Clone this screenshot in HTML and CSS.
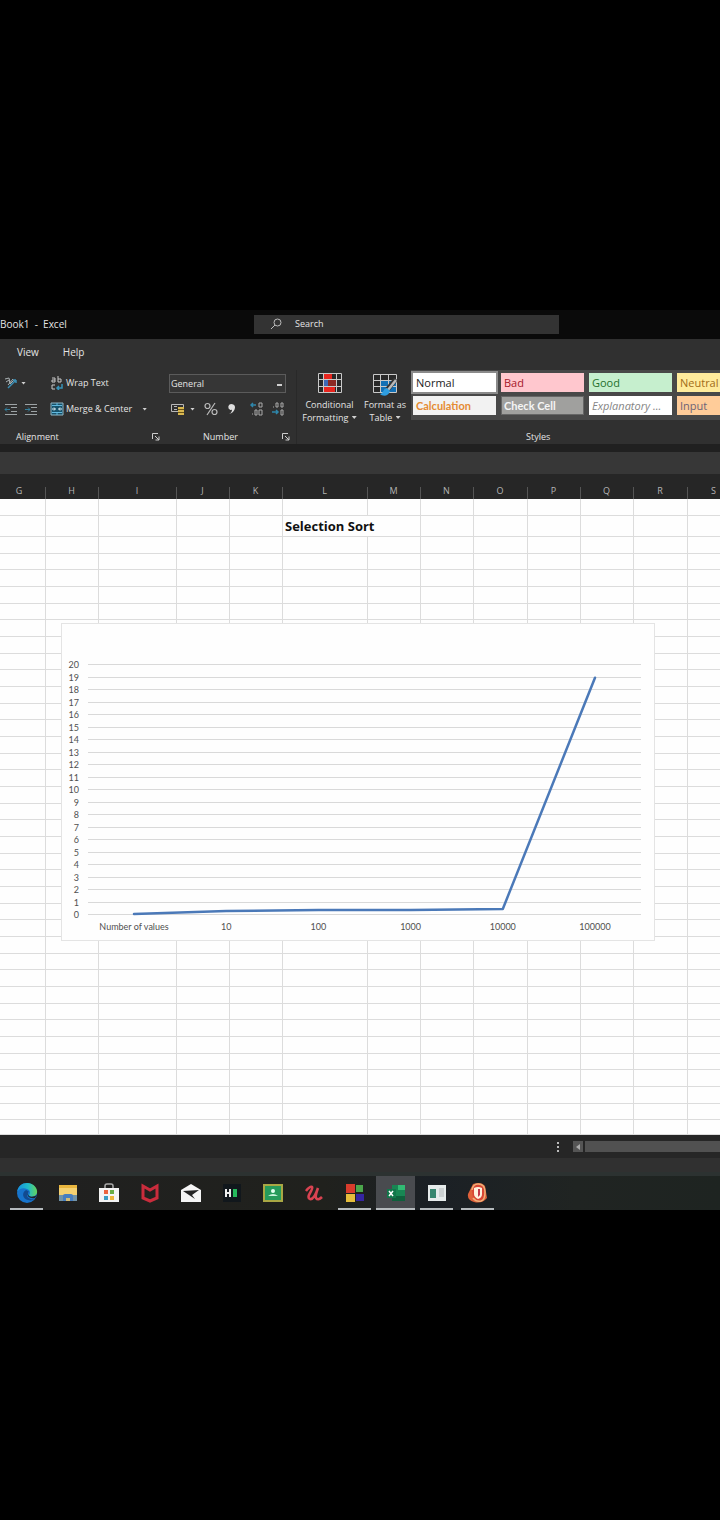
FILE: index.html
```html
<!DOCTYPE html>
<html lang="en">
<head>
<meta charset="utf-8">
<meta name="viewport" content="width=device-width, initial-scale=1">
<title>Book1 - Excel</title>
<link rel="stylesheet" href="styles.css">
</head>
<body>
<div class="screen">
  <header class="titlebar">
    <span class="doc-name">Book1 &nbsp;-&nbsp; Excel</span>
    <label class="search">
      <svg class="search-icon" viewBox="0 0 12 12"><circle cx="7.5" cy="4.5" r="3.5"/><path d="M5 7 1 11"/></svg>
      <input type="text" placeholder="Search" aria-label="Search">
    </label>
  </header>

  <nav class="tabs">
    <button type="button">View</button>
    <button type="button">Help</button>
  </nav>

  <div class="ribbon">
    <section class="group alignment">
      <div class="tools">
        <div class="tool-col">
          <button type="button" class="tool-row" aria-label="Orientation">
            <svg width="14" height="14" viewBox="0 0 14 14" fill="none"><path d="M1 3l4-1 1 4M2 6l3-2 1 4 4-4M4 9l5-6" stroke="#a9b0b2"/><path d="M4 12l8-8M12 4v3M12 4H9" stroke="#3b8fb5" stroke-width="1.5"/></svg>
            <i class="caret"></i>
          </button>
          <div class="tool-row indents">
            <button type="button" aria-label="Decrease indent"><svg width="13" height="13" viewBox="0 0 13 13" fill="none" stroke="#9da3a5"><path d="M1 1.5h12M7 4.5h6M7 8.5h6M1 11.5h12"/><path d="M6 6.5H1m2-2-2 2 2 2" stroke="#337f9d"/></svg></button>
            <button type="button" aria-label="Increase indent"><svg width="13" height="13" viewBox="0 0 13 13" fill="none" stroke="#9da3a5"><path d="M1 1.5h12M7 4.5h6M7 8.5h6M1 11.5h12"/><path d="M1 6.5h5m-2-2 2 2-2 2" stroke="#337f9d"/></svg></button>
          </div>
        </div>
        <div class="tool-col wide">
          <button type="button" class="tool-row">
            <svg width="14" height="14" viewBox="0 0 14 14" fill="none"><g stroke="#c9c9c9"><path d="M2 2h3v4H2V4h3M8 0v6h3V3H8"/><path d="M5 9H2v4h3"/></g><path d="M7 12h5V8M9 10l-2 2 2 2" stroke="#3792b8" stroke-width="1.5"/></svg>
            <span>Wrap Text</span>
          </button>
          <button type="button" class="tool-row">
            <svg width="14" height="14" viewBox="0 0 14 14" fill="none"><path d="M1 1h12v12H1z" fill="#17536c" stroke="#8fb5c4"/><path d="M2 3.5h10M2 10.5h10M7 1v2M7 11v2" stroke="#61b9df"/><path d="M2 7h3M9 7h3M4 5.5 5.500 7 4 8.500M10 5.500 8.500 7 10 8.500" stroke="#eaf5fa"/></svg>
            <span>Merge &amp; Center</span><i class="caret spaced"></i>
          </button>
        </div>
      </div>
      <footer><span>Alignment</span><button type="button" class="launcher" aria-label="Alignment settings"><svg width="8" height="8" viewBox="0 0 8 8"><path d="M.5 6V.5H6M3 3l4 4M7 3.500V7H3.500"/></svg></button></footer>
    </section>

    <section class="group number">
      <div class="tools stack">
        <select aria-label="Number format"><option>General</option></select>
        <div class="tool-row number-tools">
          <button type="button" class="money" aria-label="Accounting format"><svg width="14" height="14" viewBox="0 0 14 14" fill="none"><path d="M.5 2.500h12v7H.5z" stroke="#b8b8b8"/><path d="M3 4.500h3M3 7.500h3" stroke="#b8b8b8"/><path d="M7 5h6v8H7z" fill="#d9b850"/><path d="M7 7.500h6M7 10.500h6" stroke="#6b5518"/></svg><i class="caret"></i></button>
          <button type="button" aria-label="Percent style"><svg width="14" height="14" viewBox="0 0 14 14" fill="none" stroke="#bcbcbc" stroke-width="1.200"><circle cx="3.500" cy="4" r="2.500"/><circle cx="10.500" cy="10" r="2.500"/><path d="M11 1 3 13"/></svg></button>
          <button type="button" aria-label="Comma style"><svg width="9" height="12" viewBox="0 0 9 12"><path d="M4 1a3 3 0 0 0-1 5.700c1 .4 2 0 2 0C5 8.500 4 10 2 11c4-1 6-4 6-7C8 2 6 1 4 1Z" fill="#dedede"/></svg></button>
          <button type="button" aria-label="Increase decimal"><svg width="14" height="14" viewBox="0 0 14 14" fill="none"><path d="M6 3H1m2-2L1 3l2 2" stroke="#2e86ab" stroke-width="1.500"/><path d="M9 1h3v4H9zM5 8h2v5H5zM9 8h3v5H9zM2 12h1" stroke="#aaa"/></svg></button>
          <button type="button" aria-label="Decrease decimal"><svg width="14" height="14" viewBox="0 0 14 14" fill="none"><path d="M1 10h6m-2-2 2 2-2 2" stroke="#2e86ab" stroke-width="1.500"/><path d="M5 1h2v4H5zM10 1h2v4h-2zM10 8h2v5h-2zM2 5h1" stroke="#aaa"/></svg></button>
        </div>
      </div>
      <footer><span>Number</span><button type="button" class="launcher" aria-label="Number settings"><svg width="8" height="8" viewBox="0 0 8 8"><path d="M.5 6V.5H6M3 3l4 4M7 3.500V7H3.500"/></svg></button></footer>
    </section>

    <section class="group styles">
      <div class="tools">
        <button type="button" class="big conditional">
          <svg width="24" height="20" viewBox="0 0 24 20"><path d="M0 0h24v20H0z" fill="#292929"/><path d="M5 0h9v6H5zM5 14h12v6H5z" fill="#e8251e"/><path d="M5 7h5v6H5z" fill="#3d68b5"/><path d="M10 7h9v6h-9z" fill="#8c2923"/><path d="M.5.5h23v19H.5zM0 6.500h24M0 13.500h24M5.500 0v20M18.500 0v20" fill="none" stroke="#c9c9c9"/></svg>
          <span>Conditional<br>Formatting <i class="caret"></i></span>
        </button>
        <button type="button" class="big table-format">
          <svg width="26" height="24" viewBox="0 0 26 24"><path d="M1 1h23v18H1z" fill="#292929"/><path d="M8 7h16v12H8z" fill="#1370b5"/><path d="M1.500 1.500h23v18h-23zM1 7.500h24M1 13.500h24M8.500 1v19M16.500 1v19" fill="none" stroke="#c9c9c9"/><path d="m24 6-9 11" stroke="#343434" stroke-width="5"/><path d="m24 7-8 10" stroke="#bababa" stroke-width="2.500"/><path d="M15 15c-4 0-3 5-7 6 3 3 9 2 10-3z" fill="#2e9de0"/></svg>
          <span>Format as<br>Table <i class="caret"></i></span>
        </button>
        <div class="gallery">
          <button type="button" class="swatch normal">Normal</button>
          <button type="button" class="swatch bad">Bad</button>
          <button type="button" class="swatch good">Good</button>
          <button type="button" class="swatch neutral">Neutral</button>
          <button type="button" class="swatch calculation">Calculation</button>
          <button type="button" class="swatch check">Check Cell</button>
          <button type="button" class="swatch explanatory">Explanatory ...</button>
          <button type="button" class="swatch input">Input</button>
        </div>
      </div>
      <footer><span>Styles</span></footer>
    </section>
  </div>

  <div class="formula-bar"></div>

  <main class="sheet">
    <table>
      <colgroup><col class="c46"><col class="c53"><col class="c78"><col class="c53"><col class="c53"><col class="c85"><col class="c53"><col class="c53"><col class="c54"><col class="c53"><col class="c53"><col class="c54"><col></colgroup>
      <thead><tr><th class="clipped">G</th><th>H</th><th>I</th><th>J</th><th>K</th><th>L</th><th>M</th><th>N</th><th>O</th><th>P</th><th>Q</th><th>R</th><th>S</th></tr></thead>
      <tbody id="cells"></tbody>
    </table>
    <figure class="chart">
      <svg id="plot" viewBox="0 0 592 316" role="img" aria-label="Selection sort line chart"></svg>
    </figure>
  </main>

  <div class="scroll-row">
    <span class="dots"><i></i><i></i><i></i></span>
    <button type="button" class="scroll-left" aria-label="Scroll left"><svg width="4" height="6" viewBox="0 0 4 6"><path d="M4 0v6L0 3z"/></svg></button>
    <div class="scroll-thumb"></div>
  </div>
  <div class="status-bar"></div>

  <nav class="taskbar">
    <button type="button" class="open" aria-label="Edge"><svg width="22" height="22" viewBox="0 0 22 22"><defs><linearGradient id="edge" x1="0" x2="1"><stop stop-color="#168de0"/><stop offset=".55" stop-color="#20bcc8"/><stop offset="1" stop-color="#65d45a"/></linearGradient></defs><circle cx="11" cy="11" r="10" fill="#1774cc"/><path d="M1 10C2 4 6 1 11 1c7 0 11 6 10 10-1 4-7 5-8 2 2-2 1-5-2-6C7 5 3 7 1 10Z" fill="url(#edge)"/><path d="M10 8c-5 3-3 9 2 10 3 1 5 0 7-1-4 1-8-1-8-4 0-2 1-3 2-3-1-1-2-2-3-2Z" fill="#124b91"/><path d="M12 10c-1 5 4 6 9 3l-2 3c-5 1-9-2-7-6Z" fill="#20232a"/></svg></button>
    <button type="button" aria-label="File Explorer"><svg width="20" height="18" viewBox="0 0 20 18"><path d="M1 1h18v16H1z" fill="#e9b63e"/><path d="M1 4h18v7H1z" fill="#f5d171"/><path d="M1 11h18v6H1z" fill="#7193a8"/><path d="M5 17v-5q0-2 2-2h6q2 0 2 2v5z" fill="#477ec0"/><path d="M8 17v-3h4v3" fill="#d3bd79"/></svg></button>
    <button type="button" aria-label="Microsoft Store"><svg width="20" height="20" viewBox="0 0 20 20"><path d="M6 6V3q0-2 2-2h4q2 0 2 2v3" fill="none" stroke="#aaa" stroke-width="1.500"/><path d="M0 5h20v14H0z" fill="#f4f4f4"/><path d="M5 7h4v4H5z" fill="#ec633e"/><path d="M11 7h4v4h-4z" fill="#69ad45"/><path d="M5 13h4v4H5z" fill="#3b9cc4"/><path d="M11 13h4v4h-4z" fill="#edb63b"/></svg></button>
    <button type="button" aria-label="McAfee"><svg width="18" height="20" viewBox="0 0 18 20"><path d="M2 3v12l7 3 7-3V3L9 7z" fill="none" stroke="#c92c3c" stroke-width="3"/></svg></button>
    <button type="button" aria-label="Mail"><svg width="22" height="18" viewBox="0 0 22 18"><path d="M11 0 21 6v12H1V6z" fill="#f5f5f5"/><path d="m3 7 16-1-7 5 3 4-6-4z" fill="#242424"/></svg></button>
    <button type="button" aria-label="HackerRank"><svg width="18" height="18" viewBox="0 0 18 18"><path d="M0 0h18v18H0z" fill="#11171c"/><path d="M3 5v8M7 5v8M3 9h4" stroke="#eee" stroke-width="2"/><path d="M10 5h4v8h-4z" fill="#25b95c"/></svg></button>
    <button type="button" aria-label="Google Classroom"><svg width="20" height="18" viewBox="0 0 20 18"><path d="M1 1h18v16H1z" fill="#269b5b" stroke="#a9a744" stroke-width="2"/><circle cx="10" cy="7" r="2" fill="#e3fff0"/><path d="M5 12q5-4 10 0z" fill="#c5f2da"/></svg></button>
    <button type="button" aria-label="Udemy"><svg width="20" height="18" viewBox="0 0 20 18"><path d="M2 7q4-5 6-4 1 1-2 6t0 6q4 1 8-11-3 8-2 10 2 3 6-1" fill="none" stroke="#d94351" stroke-width="2.600"/></svg></button>
    <button type="button" class="open" aria-label="Code Blocks"><svg width="20" height="20" viewBox="0 0 20 20"><path d="M1 1h9v9H1z" fill="#d83c2c"/><path d="M11 2h7v7h-7z" fill="#4ba64b"/><path d="M1 11h9v8H1z" fill="#e5bd3c"/><path d="M11 11h8v7h-8z" fill="#3525a1"/></svg></button>
    <button type="button" class="open active" aria-label="Excel"><svg width="20" height="18" viewBox="0 0 20 18"><path d="M6 1h13v16H6z" fill="#188653"/><path d="M12 1h7v5h-7z" fill="#31ba73"/><path d="M6 12h13v5H6z" fill="#0f603c"/><path d="M1 5h9v9H1z" fill="#12764a"/><path d="m3 7 4 5m0-5-4 5" stroke="#fff" stroke-width="1.500"/></svg></button>
    <button type="button" class="open" aria-label="Console"><svg width="20" height="18" viewBox="0 0 20 18"><path d="M1 1h18v16H1z" fill="#e6ebeb"/><path d="M3 5h6v9H3z" fill="#37866f"/><path d="M12 4h5v9h-5z" fill="#ccd1d2"/></svg></button>
    <button type="button" class="open" aria-label="Security"><svg width="22" height="22" viewBox="0 0 22 22"><path d="M6 2q8-3 12 2l2 12q-5 6-13 4-7-2-6-8z" fill="#df613a"/><path d="M5 8q1-6 6-6 7 0 7 8t-4 9q-5 1-8-3" fill="#d94634" stroke="#efb077" stroke-width="1.500"/><path d="M7 6q4-2 8 0v6q0 4-4 5-4-2-4-5z" fill="#fff1dd"/><path d="M11 7h2v6l-2 2z" fill="#c3394a"/></svg></button>
  </nav>
</div>
<script src="app.js"></script>
</body>
</html>
```
FILE: styles.css
```css
* { box-sizing: border-box; }
body { margin: 0; min-height: 100vh; background: #000; color: #e4e4e4; font: 10px/14px "Open Sans", "Noto Sans", sans-serif; }
button { padding: 0; border: 0; background: none; color: inherit; font: inherit; }
svg { display: block; flex: none; }
.screen { padding: 310px 0; overflow: hidden; }

.titlebar { display: flex; align-items: center; height: 29px; padding-bottom: 1px; background: #0a0a0a; font-size: 9px; }
.doc-name { width: 254px; font-size: 10px; }
.search { display: flex; align-items: center; gap: 13px; width: 305px; height: 19px; padding-left: 16px; background: #333; }
.search-icon { width: 12px; height: 12px; fill: none; stroke: #bbb; }
.search input { width: 200px; padding: 0; border: 0; background: none; color: #e4e4e4; font: inherit; }
.search input::placeholder { color: #e4e4e4; opacity: 1; }

.tabs { display: flex; gap: 24px; height: 27px; padding: 0 0 2px 17px; background: #303030; }
.tabs button { font-size: 10px; }

.ribbon { display: flex; height: 78px; padding-top: 4px; background: #303030; }
.group { display: flex; flex-direction: column; flex: none; }
.alignment { width: 165px; padding-left: 4px; }
.number { width: 132px; padding-left: 4px; border-right: 1px solid #292929; }
.styles { flex: 1; min-width: 0; }
.tools { display: flex; height: 52px; }
.tool-col { width: 46px; }
.tool-col.wide { width: 110px; }
.tool-row { display: flex; align-items: center; gap: 3px; height: 26px; white-space: nowrap; font-size: 9px; }
.wide .tool-row { gap: 2px; }
.indents { gap: 7px; }
.caret { display: inline-block; flex: none; width: 5px; height: 3px; margin: 0 0 2px 1px; background: #d0d0d0; clip-path: polygon(0 0, 100% 0, 50% 100%); }
.tool-row .caret { margin: 0; }
.tool-row .spaced { margin-left: 8px; }
.stack { flex-direction: column; }
.number select { appearance: none; width: 117px; height: 19px; margin: 4px 0 3px; padding: 0 1px; border: 1px solid #5b5b5b; border-radius: 0; color: #e4e4e4; font: 9px/14px "Open Sans", sans-serif; background: linear-gradient(#d0d0d0, #d0d0d0) 107px 9px / 5px 2px no-repeat #363636; }
.number-tools { gap: 9px; padding-left: 2px; }
.money { display: flex; align-items: center; gap: 5px; }
.number-tools button:nth-child(4) { margin-left: 5px; }
.number-tools button:nth-child(5) { margin-left: -2px; }
.group footer { display: flex; align-items: center; height: 14px; margin-top: 8px; font-size: 9px; }
.alignment footer { padding: 0 5px 0 12px; justify-content: space-between; }
.number footer { padding: 0 6px 0 34px; justify-content: space-between; }
.styles footer { padding-left: 229px; }
.launcher svg { fill: none; stroke: #ccc; }

.big { display: flex; flex-direction: column; align-items: center; line-height: 13px; font-size: 9px; white-space: nowrap; }
.conditional { width: 65px; gap: 5px; padding-top: 3px; }
.table-format { width: 46px; gap: 1px; padding-top: 3px; }
.gallery { display: grid; grid-template-columns: repeat(4, 83px); grid-auto-rows: 19px; gap: 4px 5px; flex: 1; min-width: 0; height: 50px; margin-left: 3px; padding: 3px 0 0 2px; background: #484848; overflow: hidden; }
.swatch { padding: 0 3px; text-align: left; font: 11px/19px "Open Sans", sans-serif; white-space: nowrap; }
.normal { background: #fff; color: #222; outline: 2px solid #8b8b8b; }
.bad { background: #ffc7ce; color: #a5182a; }
.good { background: #c6efce; color: #24702d; }
.neutral { background: #ffeb9c; color: #a16c18; }
.calculation { background: #f2f2f2; color: #e58b33; font-weight: 700; font-family: Lato, sans-serif; }
.check { padding: 0 2px; background: #a0a09e; color: #f5f5f5; font-weight: 700; font-family: Lato, sans-serif; border: 1px solid #666; line-height: 17px; }
.explanatory { background: #fff; color: #858585; font-style: italic; }
.input { background: #ffcc99; color: #6d6377; }

.formula-bar { height: 30px; background: #373737; border-top: 8px solid #202020; }
.sheet { position: relative; overflow: hidden; background: #fefefe; }
.sheet table { width: 100%; min-width: 741px; border-spacing: 0; table-layout: fixed; }
.c46 { width: 46px; } .c53 { width: 53px; } .c54 { width: 54px; } .c78 { width: 78px; } .c85 { width: 85px; }
.sheet th { height: 25px; padding: 9px 2px 0 0; background: linear-gradient(#555, #555) right bottom / 1px 12px no-repeat #262626; color: #b5b5b5; font-size: 9px; line-height: 16px; font-weight: 400; }
.sheet th.clipped { padding-right: 8px; }
.sheet td { height: 17px; padding: 0; border-right: 1px solid #dcdcdc; border-bottom: 1px solid #dcdcdc; line-height: 14px; }
.sheet tr.title-row td { height: 21px; }
.sheet tr.short td { height: 16px; }
.sheet tr.last td { height: 15px; }
.sheet td.heading { padding-left: 2px; color: #111; font-size: 13px; font-weight: 700; white-space: nowrap; }
.chart { position: absolute; left: 62px; top: 150px; width: 592px; margin: 0; background: #fefefe; outline: 1px solid #e4e4e4; }
.chart text { fill: #505050; font: 9px Lato, sans-serif; }
.chart .grid { stroke: #d9d9d9; }
.chart .series { fill: none; stroke: #4b79b8; stroke-width: 2.5; stroke-linejoin: round; stroke-linecap: round; }

.scroll-row { display: flex; align-items: center; height: 23px; padding-left: 557px; background: #262626; }
.dots { display: flex; flex-direction: column; gap: 2px; width: 16px; }
.dots i { width: 2px; height: 2px; background: #bbb; }
.scroll-left { display: grid; place-items: center; width: 10px; height: 11px; background: #555; }
.scroll-left svg { fill: #aaa; }
.scroll-thumb { flex: 1; height: 11px; margin-left: 2px; background: #515151; }
.status-bar { height: 18px; background: #303030; border-bottom: 4px solid #2c3231; }
.taskbar { display: flex; height: 34px; padding-left: 6px; background: linear-gradient(90deg, #202020, #20211d 45%, #1b2025 60%, #202422 80%, #1e2421); }
.taskbar button { display: grid; place-items: center; width: 41px; padding-top: 2px; border-bottom: 2px solid transparent; }
.taskbar .open { background: linear-gradient(#b5babd, #b5babd) center bottom / 33px 2px no-repeat border-box; }
.taskbar .active { background: linear-gradient(#b5babd, #b5babd) center bottom / 39px 2px no-repeat border-box, linear-gradient(#494b4f, #494b4f) center / 39px 100% no-repeat border-box; }
```
FILE: app.js
```js
const body = document.getElementById("cells");
const rowCount = 38;
const columns = 13;
for (let r = 0; r < rowCount; r++) {
  const row = body.insertRow();
  if (r === 1) row.className = "title-row";
  else if (r === rowCount - 1) row.className = "last";
  else if (r > 1 && r % 3 === 0) row.className = "short";
  for (let c = 0; c < columns; c++) {
    // The heading spills over from L into M.
    if (r === 1 && c === 6) continue;
    const cell = row.insertCell();
    if (r === 1 && c === 5) {
      cell.colSpan = 2;
      cell.className = "heading";
      cell.textContent = "Selection Sort";
    }
  }
}

const plot = document.getElementById("plot");
function draw(tag, attrs, text) {
  const node = document.createElementNS("http://www.w3.org/2000/svg", tag);
  for (const key in attrs) node.setAttribute(key, attrs[key]);
  if (text !== undefined) node.textContent = text;
  plot.appendChild(node);
}
const baseline = 290;
const unit = 12.5;
for (let v = 0; v <= 20; v++) {
  const y = Math.round(baseline - v * unit) + 0.5;
  draw("line", { class: "grid", x1: 26, x2: 579, y1: y, y2: y });
  draw("text", { x: 17, y: y + 3, "text-anchor": "end" }, v);
}
const labels = ["Number of values", "10", "100", "1000", "10000", "100000"];
const values = [0, 0.24, 0.32, 0.32, 0.4, 18.9];
const x = i => 72 + i * 92.2;
labels.forEach((label, i) => draw("text", { x: x(i), y: 306, "text-anchor": "middle" }, label));
draw("polyline", { class: "series", points: values.map((v, i) => `${x(i)},${baseline - v * unit}`).join(" ") });
```
